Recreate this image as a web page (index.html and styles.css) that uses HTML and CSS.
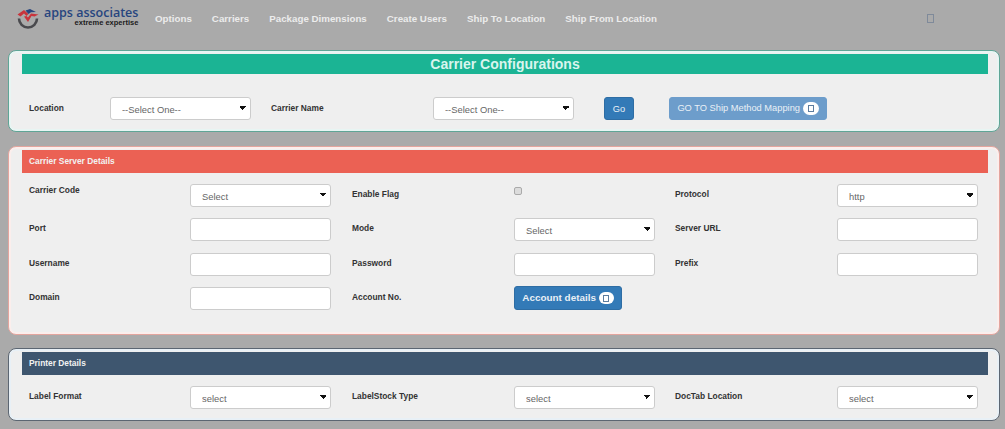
FILE: index.html
```html
<!DOCTYPE html>
<html>
  <head>
    <title>Carrier Configurations</title>
    <meta charset="UTF-8">
    <link rel="stylesheet" href="styles.css">
  </head>
  <body>
    <nav class="navbar">
      <div class="logo">
        <svg class="logo-mark" width="22" height="21" viewBox="0 0 22 21">
          <path d="M2 10.5 A9 9 0 0 0 20 10.5" fill="none" stroke="#4a4a4e" stroke-width="2.6"/>
          <path d="M0.5 6.5 L7 2 L11.5 6 L9.5 8 L7 5.5 L3.5 8.5 Z" fill="#c8343c"/>
          <path d="M7 8.5 L9.5 8 L11 9.5 L14 5.5 L21.5 6.5 L17.5 8.5 L14.5 8 L11 14 Z" fill="#c8343c"/>
          <path d="M8.5 2.5 L13 1 L19 4 L14 4.3 L11.5 6 Z" fill="#27457f"/>
        </svg>
        <div class="logo-text">
          <div class="logo-name">apps associates</div>
          <div class="logo-tag">extreme expertise</div>
        </div>
      </div>
      <a href="#">Options</a>
      <a href="#">Carriers</a>
      <a href="#">Package Dimensions</a>
      <a href="#">Create Users</a>
      <a href="#">Ship To Location</a>
      <a href="#">Ship From Location</a>
      <span class="missing-glyph nav-glyph"></span>
    </nav>

    <section class="panel panel-green">
      <h1 class="title">Carrier Configurations</h1>
      <div class="search-row">
        <label class="lbl lbl-location">Location</label>
        <select class="ctl"><option>--Select One--</option></select>
        <label class="lbl lbl-carrier">Carrier Name</label>
        <select class="ctl"><option>--Select One--</option></select>
        <button class="btn btn-go">Go</button>
        <button class="btn btn-map">GO TO Ship Method Mapping <span class="badge"><span class="missing-glyph"></span></span></button>
      </div>
    </section>

    <section class="panel panel-red">
      <h2 class="heading heading-red">Carrier Server Details</h2>
      <div class="fields">
        <div class="field"><label class="lbl up">Carrier Code</label><select class="ctl"><option>Select</option></select></div>
        <div class="field"><label class="lbl">Enable Flag</label><input type="checkbox" class="check"></div>
        <div class="field"><label class="lbl">Protocol</label><select class="ctl"><option>http</option></select></div>

        <div class="field"><label class="lbl">Port</label><input type="text" class="ctl"></div>
        <div class="field"><label class="lbl">Mode</label><select class="ctl"><option>Select</option></select></div>
        <div class="field"><label class="lbl">Server URL</label><input type="text" class="ctl"></div>

        <div class="field"><label class="lbl">Username</label><input type="text" class="ctl"></div>
        <div class="field"><label class="lbl">Password</label><input type="text" class="ctl"></div>
        <div class="field"><label class="lbl">Prefix</label><input type="text" class="ctl"></div>

        <div class="field"><label class="lbl">Domain</label><input type="text" class="ctl"></div>
        <div class="field"><label class="lbl">Account No.</label><button class="btn btn-account">Account details <span class="badge"><span class="missing-glyph"></span></span></button></div>
      </div>
    </section>

    <section class="panel panel-navy">
      <h2 class="heading heading-navy">Printer Details</h2>
      <div class="fields">
        <div class="field"><label class="lbl">Label Format</label><select class="ctl"><option>select</option></select></div>
        <div class="field"><label class="lbl">LabelStock Type</label><select class="ctl"><option>select</option></select></div>
        <div class="field"><label class="lbl">DocTab Location</label><select class="ctl"><option>select</option></select></div>
      </div>
    </section>
  </body>
</html>
```

FILE: styles.css
```css
* {
	box-sizing: border-box;
}
html, body {
	height: 100%;
}
body {
	margin: 0;
	background-color: #aaaaaa;
	font-family: "Liberation Sans", Arial, sans-serif;
	overflow: hidden;
}

/* top bar */
.navbar {
	display: flex;
	align-items: center;
	height: 50px;
	padding: 0 0 14px 17px;
}
.navbar a {
	color: #ececec;
	font-size: 9.75px;
	font-weight: bold;
	text-decoration: none;
	margin-right: 20px;
}
.logo {
	display: flex;
	width: 138px;
	gap: 5px;
}
.logo-mark {
	margin-top: 1px;
}
.logo-name {
	color: #27457f;
	font-family: "Open Sans", sans-serif;
	font-size: 12.5px;
	font-weight: 600;
	line-height: 12px;
	white-space: nowrap;
}
.logo-tag {
	color: #1c1c1c;
	font-size: 7.5px;
	font-weight: bold;
	line-height: 8px;
	text-align: right;
	white-space: nowrap;
}
.missing-glyph {
	display: inline-block;
	width: 7px;
	height: 9px;
	border: 1px solid #7f8a9a;
}
.nav-glyph {
	margin-left: 250px;
	margin-top: 1px;
}

/* panels */
.panel {
	margin: 0 5px 14px 8px;
	padding: 3px 11px 0 13px;
	background-color: #efefef;
	border: 1px solid #5fa596;
	border-radius: 8px;
	box-shadow: inset 0 0 0 2px #e8f5f3;
}
.panel-green {
	height: 82px;
}
.panel-red {
	height: 189px;
	margin-bottom: 13px;
	border-color: #e3a59e;
	box-shadow: inset 0 0 0 2px #fbeeec;
}
.panel-navy {
	height: 73px;
	border-color: #5c6672;
	box-shadow: inset 0 0 0 2px #e8f0f6;
}
.title {
	margin: 0;
	height: 20px;
	background-color: #1bb494;
	color: #d9f5ee;
	font-size: 14px;
	line-height: 20px;
	text-align: center;
}
.heading {
	margin: 0;
	height: 23px;
	padding-left: 7px;
	color: #f2f2f2;
	font-size: 8.4px;
	line-height: 23px;
}
.heading-red {
	background-color: #eb6154;
}
.heading-navy {
	background-color: #3e566f;
}

/* form controls */
.lbl {
	color: #333333;
	font-size: 8.4px;
	font-weight: bold;
	line-height: 21px;
}
.lbl.up {
	line-height: 12px;
}
.ctl {
	width: 141px;
	height: 23px;
	padding: 0 11px;
	background-color: #ffffff;
	border: 1px solid #cccccc;
	border-radius: 3px;
	color: #666666;
	font-family: inherit;
	font-size: 9.4px;
}
select.ctl {
	appearance: none;
	padding-top: 2px;
	background-image: linear-gradient(45deg, transparent 50%, #111111 50%), linear-gradient(-45deg, transparent 50%, #111111 50%);
	background-size: 3px 5px;
	background-position: right 7px top 8px, right 4px top 8px;
	background-repeat: no-repeat;
}
.check {
	appearance: none;
	width: 8px;
	height: 8px;
	margin: 3px 0 0;
	background-color: #dcdcdc;
	border: 1px solid #aaaaaa;
	border-radius: 2px;
}
.btn {
	height: 23px;
	border: 1px solid #2e6da4;
	border-radius: 3px;
	background-color: #337ab7;
	color: #e9f0f6;
	font-family: inherit;
	font-size: 9.3px;
}
.badge {
	display: inline-flex;
	align-items: center;
	justify-content: center;
	width: 16px;
	height: 13px;
	border-radius: 7px;
	background-color: #ffffff;
	vertical-align: middle;
}
.badge .missing-glyph {
	width: 6px;
	height: 7px;
	border-color: #5c7da0;
}

/* location / carrier row */
.search-row {
	display: flex;
	align-items: center;
	margin-top: 23px;
	padding-left: 7px;
}
.lbl-location {
	width: 81px;
}
.lbl-carrier {
	width: 182px;
	padding-left: 20px;
}
.btn-go {
	width: 30px;
	margin-left: 30px;
}
.btn-map {
	width: 158px;
	margin-left: 35px;
	padding: 0;
	background-color: #6d9dcb;
	border-color: #6d9dcb;
}
.btn-account {
	width: 108px;
	height: 24px;
	margin-top: -1px;
	padding: 0;
	font-size: 9.9px;
	font-weight: bold;
}
.btn-account .badge {
	width: 15px;
	height: 12px;
}

/* three column label + control rows */
.fields {
	display: grid;
	grid-template-columns: 323px 323px 303px;
	grid-auto-rows: 34.3px;
	margin-top: 11px;
	padding-left: 7px;
}
.field {
	display: grid;
	grid-template-columns: 162px 141px;
	align-items: start;
}
.field:nth-child(3n+1) {
	grid-template-columns: 161px 141px;
}
```
